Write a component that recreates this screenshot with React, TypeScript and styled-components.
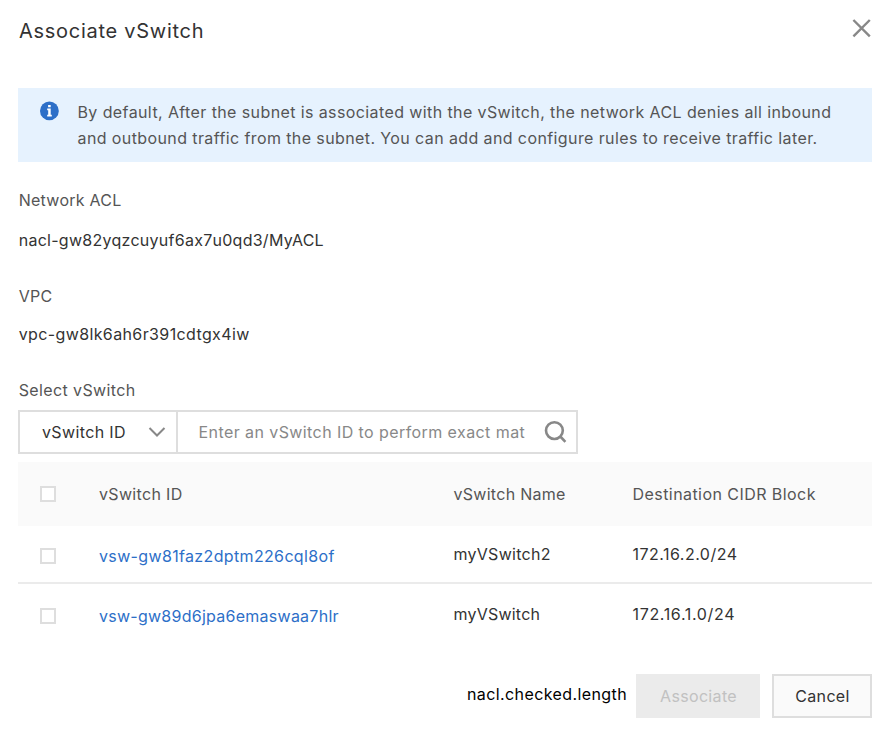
import React, { useState } from "react";
import styled, { createGlobalStyle } from "styled-components";

const GlobalStyle = createGlobalStyle`
  *, *::before, *::after { box-sizing: border-box; }
  body {
    margin: 0;
    background: #fff;
    font-family: Inter, Roboto, "Liberation Sans", sans-serif;
    font-size: 16px;
    color: #333;
  }
  button, input { font: inherit; letter-spacing: inherit; }
`;

const Dialog = styled.section`
  display: flex;
  flex-direction: column;
  width: 892px;
  height: 730px;
  padding: 0 20px 12px 18px;
  background: #fff;
`;

const Header = styled.header`
  display: flex;
  justify-content: space-between;
  align-items: flex-start;
  height: 88px;
  padding: 17px 0 0 1px;
`;

const Title = styled.h1`
  margin: 0;
  font-size: 20px;
  font-weight: 400;
  line-height: 28px;
  letter-spacing: 0.73px;
`;

const CloseButton = styled.button`
  display: flex;
  padding: 0;
  margin: 1px 0 0;
  border: 0;
  background: none;
  color: #888;
`;

const Notice = styled.div`
  display: flex;
  height: 74px;
  padding: 11px 22px;
  background: #e6f2fe;
  color: #555;
`;

const NoticeIcon = styled.svg`
  flex: none;
  width: 20px;
  height: 20px;
  margin: 2px 17.5px 0 0;
`;

const NoticeText = styled.p`
  margin: 0;
  line-height: 26px;
  white-space: nowrap;
  letter-spacing: 0.396px;
`;

const Field = styled.div<{ $gap: number; $top: number }>`
  display: flex;
  flex-direction: column;
  gap: ${(p) => p.$gap}px;
  margin-top: ${(p) => p.$top}px;
  padding-left: 0.7px;
`;

const Label = styled.span<{ $spacing: number }>`
  line-height: 20px;
  color: #555;
  letter-spacing: ${(p) => p.$spacing}px;
`;

const Value = styled.span<{ $spacing: number }>`
  line-height: 20px;
  letter-spacing: ${(p) => p.$spacing}px;
`;

const SearchBar = styled.div`
  display: flex;
  width: 560px;
  height: 44px;
  margin-top: 10px;
  border: 2px solid #dedede;
`;

const Picker = styled.button`
  display: flex;
  align-items: center;
  justify-content: space-between;
  width: 158px;
  padding: 0 10.5px 0 22px;
  border: 0;
  border-right: 2px solid #dedede;
  background: none;
  color: #333;
  letter-spacing: 0.37px;
`;

const SearchInput = styled.input`
  width: 346px;
  margin-left: 20px;
  padding: 0 18px 0 0.5px;
  border: 0;
  outline: 0;
  background: none;
  color: #333;
  letter-spacing: 0.42px;
  &::placeholder { color: #888; opacity: 1; }
`;

const SearchIcon = styled.svg`
  width: 24px;
  height: 24px;
  margin-top: 8px;
  color: #888;
`;

const Row = styled.div<{ $kind: "head" | "body" | "last" }>`
  display: grid;
  grid-template-columns: 80px 354.5px 179px 1fr;
  align-items: center;
  height: ${(p) => ({ head: 64, body: 58, last: 60 })[p.$kind]}px;
  margin-top: ${(p) => (p.$kind === "head" ? 8 : 0)}px;
  padding-top: ${(p) => (p.$kind === "head" ? 0 : 4)}px;
  border-bottom: ${(p) => (p.$kind === "body" ? "2px solid #ebebeb" : "0")};
  background: ${(p) => (p.$kind === "head" ? "#fafafa" : "#fff")};
  color: ${(p) => (p.$kind === "head" ? "#555" : "#333")};
`;

const Checkbox = styled.input.attrs({ type: "checkbox" })`
  appearance: none;
  width: 16px;
  height: 16px;
  margin: 0 0 0 22px;
  border: 2px solid #dedede;
  background: #fff;
  &:checked { background: #2f6fc9; border-color: #2f6fc9; }
`;

const Cell = styled.span<{ $spacing: number; $raised?: boolean }>`
  padding: 0 0 ${(p) => (p.$raised ? 4 : 0)}px 1px;
  line-height: 20px;
  white-space: nowrap;
  letter-spacing: ${(p) => p.$spacing}px;
`;

const SwitchLink = styled.a<{ $spacing: number }>`
  padding-left: 1px;
  line-height: 20px;
  color: #2d6fc8;
  text-decoration: none;
  letter-spacing: ${(p) => p.$spacing}px;
`;

const Footer = styled.footer`
  display: flex;
  align-items: center;
  justify-content: flex-end;
  height: 44px;
  margin-top: auto;
`;

const Counter = styled.span`
  padding-bottom: 4px;
  margin-right: 9px;
  color: #000;
  letter-spacing: 0.4px;
`;

const ActionButton = styled.button<{ $primary?: boolean }>`
  width: ${(p) => (p.$primary ? 124 : 100)}px;
  height: 44px;
  margin-right: ${(p) => (p.$primary ? 12 : 0)}px;
  padding: 0 0 0 1px;
  border: 2px solid ${(p) => (p.$primary ? "#ebebeb" : "#dedede")};
  background: ${(p) => (p.$primary ? "#ebebeb" : "#fafafa")};
  color: ${(p) => (p.$primary ? "#c1c1c1" : "#333")};
  letter-spacing: ${(p) => (p.$primary ? 0.34 : 0.35)}px;
`;

const switches = [
  { id: "vsw-gw81faz2dptm226cql8of", name: "myVSwitch2", cidr: "172.16.2.0/24", idGap: 0.35, nameGap: 0.27, cidrGap: 0.48 },
  { id: "vsw-gw89d6jpa6emaswaa7hlr", name: "myVSwitch", cidr: "172.16.1.0/24", idGap: 0.26, nameGap: 0.22, cidrGap: 0.66 },
];

export default function App() {
  const [query, setQuery] = useState("");
  return (
    <>
      <GlobalStyle />
      <Dialog role="dialog">
        <Header>
          <Title>Associate vSwitch</Title>
          <CloseButton aria-label="Close">
            <svg width="20" height="20" viewBox="0 0 20 20" fill="none" stroke="currentColor" strokeWidth="2.4">
              <path d="M1.4 2L17.8 18.4M17.8 2L1.4 18.4" />
            </svg>
          </CloseButton>
        </Header>

        <Notice>
          <NoticeIcon viewBox="0 0 20 20">
            <circle cx="9.4" cy="9.9" r="9.4" fill="#2d6fc8" />
            <path d="M8.1 4.1h2.6v2.2H8.1zM7.2 7.6h3.5v6.2h1.1v1.6H7.2v-1.6h1V9.2h-1z" fill="#fff" />
          </NoticeIcon>
          <NoticeText>
            By default, After the subnet is associated with the vSwitch, the network ACL denies all inbound
            <br />
            and outbound traffic from the subnet. You can add and configure rules to receive traffic later.
          </NoticeText>
        </Notice>

        <Field $gap={20} $top={28}>
          <Label $spacing={0.26}>Network ACL</Label>
          <Value $spacing={0.27}>nacl-gw82yqzcuyuf6ax7u0qd3/MyACL</Value>
        </Field>
        <Field $gap={18} $top={36}>
          <Label $spacing={0.3}>VPC</Label>
          <Value $spacing={0.38}>vpc-gw8lk6ah6r391cdtgx4iw</Value>
        </Field>
        <Field $gap={0} $top={36}>
          <Label $spacing={0.38}>Select vSwitch</Label>
        </Field>

        <SearchBar>
          <Picker>
            vSwitch ID
            <svg width="18" height="12" viewBox="0 0 18 12" fill="none" stroke="#888" strokeWidth="2">
              <path d="M1.5 2L9 9.5L16.5 2" />
            </svg>
          </Picker>
          <SearchInput
            placeholder="Enter an vSwitch ID to perform exact mat"
            value={query}
            onChange={(e) => setQuery(e.target.value)}
          />
          <SearchIcon viewBox="0 0 24 24" fill="none" stroke="currentColor" strokeWidth="2.6">
            <circle cx="10.4" cy="10.6" r="8.4" />
            <path d="M16.3 16.5L21.4 21.8" />
          </SearchIcon>
        </SearchBar>

        <Row $kind="head">
          <Checkbox aria-label="Select all" />
          <Cell $spacing={0.33}>vSwitch ID</Cell>
          <Cell $spacing={0.28}>vSwitch Name</Cell>
          <Cell $spacing={0.44}>Destination CIDR Block</Cell>
        </Row>
        {switches.map((s, i) => (
          <Row key={s.id} $kind={i === 0 ? "body" : "last"}>
            <Checkbox aria-label={s.id} />
            <SwitchLink href="#" $spacing={s.idGap}>{s.id}</SwitchLink>
            <Cell $raised $spacing={s.nameGap}>{s.name}</Cell>
            <Cell $raised $spacing={s.cidrGap}>{s.cidr}</Cell>
          </Row>
        ))}

        <Footer>
          <Counter>nacl.checked.length</Counter>
          <ActionButton $primary disabled>Associate</ActionButton>
          <ActionButton>Cancel</ActionButton>
        </Footer>
      </Dialog>
    </>
  );
}
